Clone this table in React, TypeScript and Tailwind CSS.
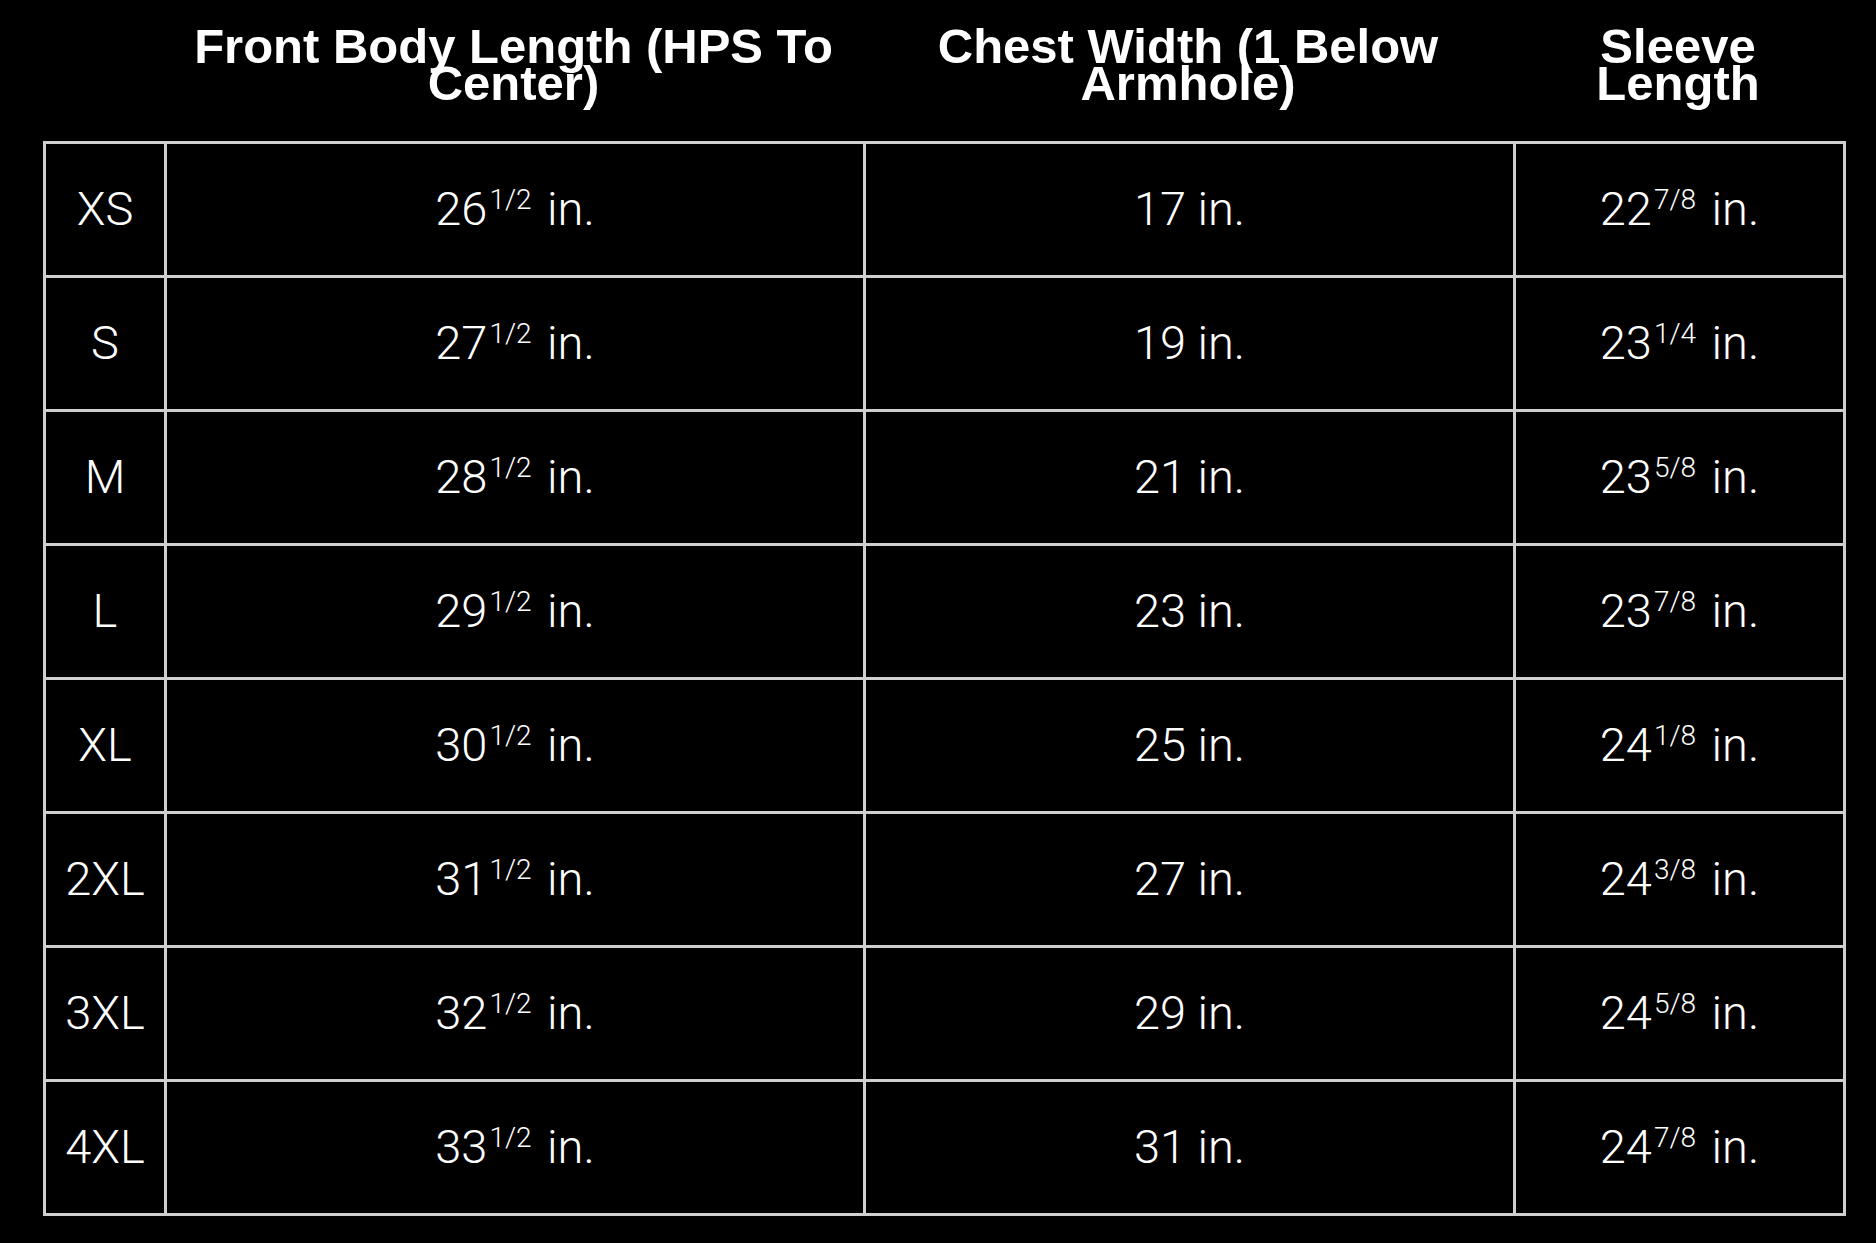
const headers = [
  ["Front Body Length (HPS To", "Center)"],
  ["Chest Width (1 Below", "Armhole)"],
  ["Sleeve", "Length"],
];

type Measure = [string, string?];

const rows: { size: string; body: Measure; chest: Measure; sleeve: Measure }[] = [
  { size: "XS", body: ["26", "1/2"], chest: ["17"], sleeve: ["22", "7/8"] },
  { size: "S", body: ["27", "1/2"], chest: ["19"], sleeve: ["23", "1/4"] },
  { size: "M", body: ["28", "1/2"], chest: ["21"], sleeve: ["23", "5/8"] },
  { size: "L", body: ["29", "1/2"], chest: ["23"], sleeve: ["23", "7/8"] },
  { size: "XL", body: ["30", "1/2"], chest: ["25"], sleeve: ["24", "1/8"] },
  { size: "2XL", body: ["31", "1/2"], chest: ["27"], sleeve: ["24", "3/8"] },
  { size: "3XL", body: ["32", "1/2"], chest: ["29"], sleeve: ["24", "5/8"] },
  { size: "4XL", body: ["33", "1/2"], chest: ["31"], sleeve: ["24", "7/8"] },
];

const cols = "grid grid-cols-[121px_699px_650px_330px]";
const cell =
  "flex h-[134px] items-center justify-center border-l-[3px] border-t-[3px] border-[#cfcfcf]";

function Value({ m }: { m: Measure }) {
  const [whole, frac] = m;
  return (
    <span className="whitespace-nowrap">
      {whole}
      {frac && <sup className="-top-4 ml-[2px] mr-[4px] text-[28px]">{frac}</sup>}
      {" in."}
    </span>
  );
}

export default function App() {
  return (
    <div className="min-h-screen w-full bg-black text-white">
      <div className="ml-[43px] w-[1803px]">
        <div
          className={`${cols} h-[141px] items-start pt-[28px] font-['Liberation_Sans',Arial,sans-serif] text-[49px] font-bold leading-[37px]`}
        >
          <div />
          {headers.map(([a, b]) => (
            <div key={a} className="whitespace-nowrap text-center">
              {a}
              <br />
              {b}
            </div>
          ))}
        </div>

        <div
          className={`${cols} w-[1803px] border-r-[3px] border-b-[3px] border-[#cfcfcf] font-['Roboto','Liberation_Sans',sans-serif] text-[47px] font-light`}
        >
          {rows.map((r) => (
            <div key={r.size} className="contents">
              <div className={cell}>{r.size}</div>
              <div className={cell}>
                <Value m={r.body} />
              </div>
              <div className={cell}>
                <Value m={r.chest} />
              </div>
              <div className={cell}>
                <Value m={r.sleeve} />
              </div>
            </div>
          ))}
        </div>
      </div>
    </div>
  );
}
